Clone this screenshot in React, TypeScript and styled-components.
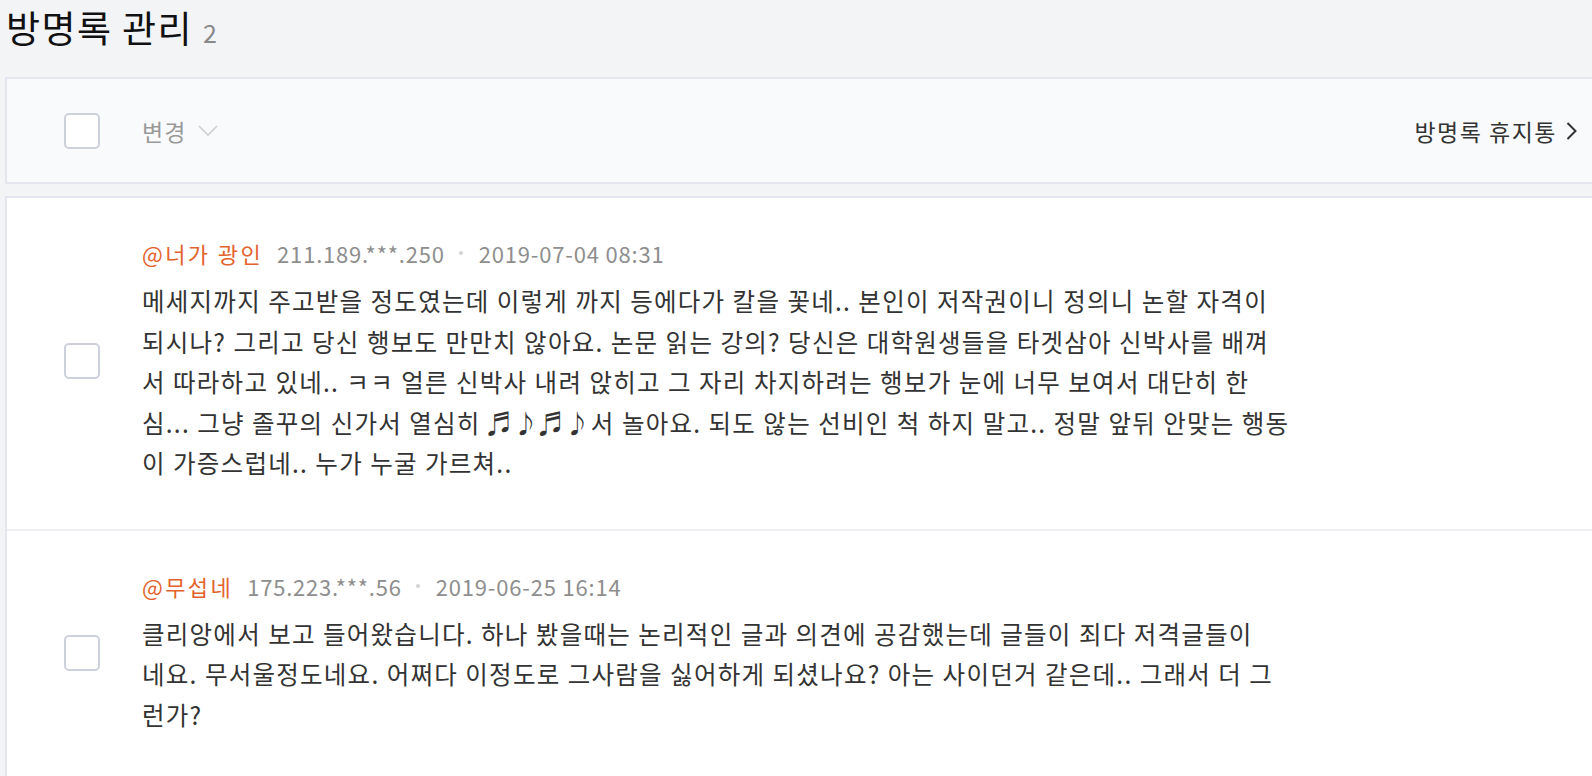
import { Fragment } from 'react'
import styled, { createGlobalStyle } from 'styled-components'

const GlobalStyle = createGlobalStyle`
  html, body {
    margin: 0;
    padding: 0;
    background: #f3f4f6;
    overflow: hidden;
  }
  body {
    font-family: "Noto Sans CJK KR", "Noto Sans", sans-serif;
    color: #333;
  }
`

const Page = styled.main`
  width: 1595px;
  padding-left: 5px;
`

const Header = styled.header`
  display: flex;
  align-items: baseline;
  padding-top: 5px;
  margin-bottom: 27px;
`

const Title = styled.h1`
  margin: 0 0 0 1px;
  font-size: 37px;
  line-height: 44px;
  font-weight: 400;
  letter-spacing: 1.4px;
  color: #111;
`

const Count = styled.span`
  margin-left: 10px;
  font-size: 25px;
  color: #888;
`

const Toolbar = styled.div`
  display: flex;
  align-items: center;
  height: 107px;
  box-sizing: border-box;
  padding: 0 21px 0 57px;
  background: #f9fafc;
  border: 2px solid #e3e6ee;
`

const Checkbox = styled.span`
  display: block;
  flex-shrink: 0;
  width: 36px;
  height: 36px;
  box-sizing: border-box;
  border: 2px solid #ccd1db;
  border-radius: 5px;
  background: #fff;
`

const ChangeButton = styled.button`
  display: flex;
  align-items: center;
  gap: 12px;
  margin-left: 42px;
  padding: 0;
  border: 0;
  background: none;
  font-family: inherit;
  font-size: 23px;
  letter-spacing: 1px;
  color: #999;
  cursor: pointer;
`

const TrashLink = styled.a`
  display: flex;
  align-items: center;
  gap: 9px;
  margin-left: auto;
  font-size: 23px;
  letter-spacing: 1.5px;
  color: #333;
  text-decoration: none;
`

const List = styled.ul`
  margin: 12px 0 0;
  padding: 0;
  list-style: none;
  background: #fff;
  border: 2px solid #e3e6ee;
`

const Row = styled.li`
  display: flex;
  align-items: center;
  padding: 40px 0 45px 57px;
  border-top: 2px solid #eef0f4;

  &:first-child {
    border-top: 0;
  }
`

const Content = styled.div`
  margin-left: 42px;
`

const Meta = styled.div`
  display: flex;
  align-items: center;
  font-size: 22px;
  line-height: 30px;
  letter-spacing: 0.8px;
  color: #8e8e8e;
`

const Name = styled.span`
  color: #e3622c;
  margin-right: 14px;
  letter-spacing: 2.4px;
`

const Dot = styled.span`
  display: inline-block;
  width: 4px;
  height: 4px;
  margin: 0 16px 0 14px;
  border-radius: 50%;
  background: #d4d4d4;
`

const Body = styled.p`
  margin: 13px 0 0;
  font-size: 24.5px;
  line-height: 40.5px;
  letter-spacing: 1.25px;
  word-spacing: 0.5px;
  color: #333;
  white-space: nowrap;
`

const ChevronDown = () => (
  <svg width="20" height="12" viewBox="0 0 20 12" fill="none">
    <polyline points="1,1 10,10 19,1" stroke="#cfcfcf" strokeWidth="1.6" />
  </svg>
)

const ChevronRight = () => (
  <svg width="11" height="18" viewBox="0 0 11 18" fill="none">
    <polyline points="1.5,1 9.5,9 1.5,17" stroke="#333" strokeWidth="2" />
  </svg>
)

const comments = [
  {
    name: '@너가 광인',
    ip: '211.189.***.250',
    date: '2019-07-04 08:31',
    lines: [
      '메세지까지 주고받을 정도였는데 이렇게 까지 등에다가 칼을 꽃네.. 본인이 저작권이니 정의니 논할 자격이',
      '되시나? 그리고 당신 행보도 만만치 않아요. 논문 읽는 강의? 당신은 대학원생들을 타겟삼아 신박사를 배껴',
      '서 따라하고 있네.. ㅋㅋ 얼른 신박사 내려 앉히고 그 자리 차지하려는 행보가 눈에 너무 보여서 대단히 한',
      '심... 그냥 졸꾸의 신가서 열심히 ♬♪♬♪서 놀아요. 되도 않는 선비인 척 하지 말고.. 정말 앞뒤 안맞는 행동',
      '이 가증스럽네.. 누가 누굴 가르쳐..',
    ],
  },
  {
    name: '@무섭네',
    ip: '175.223.***.56',
    date: '2019-06-25 16:14',
    lines: [
      '클리앙에서 보고 들어왔습니다. 하나 봤을때는 논리적인 글과 의견에 공감했는데 글들이 죄다 저격글들이',
      '네요. 무서울정도네요. 어쩌다 이정도로 그사람을 싫어하게 되셨나요? 아는 사이던거 같은데.. 그래서 더 그',
      '런가?',
    ],
  },
]

export default function App() {
  return (
    <Page>
      <GlobalStyle />
      <Header>
        <Title>방명록 관리</Title>
        <Count>2</Count>
      </Header>

      <Toolbar>
        <Checkbox />
        <ChangeButton>
          변경
          <ChevronDown />
        </ChangeButton>
        <TrashLink href="#">
          방명록 휴지통
          <ChevronRight />
        </TrashLink>
      </Toolbar>

      <List>
        {comments.map(c => (
          <Row key={c.date}>
            <Checkbox />
            <Content>
              <Meta>
                <Name>{c.name}</Name>
                {c.ip}
                <Dot />
                {c.date}
              </Meta>
              <Body>
                {c.lines.map((line, i) => (
                  <Fragment key={i}>
                    {i > 0 && <br />}
                    {line}
                  </Fragment>
                ))}
              </Body>
            </Content>
          </Row>
        ))}
      </List>
    </Page>
  )
}
